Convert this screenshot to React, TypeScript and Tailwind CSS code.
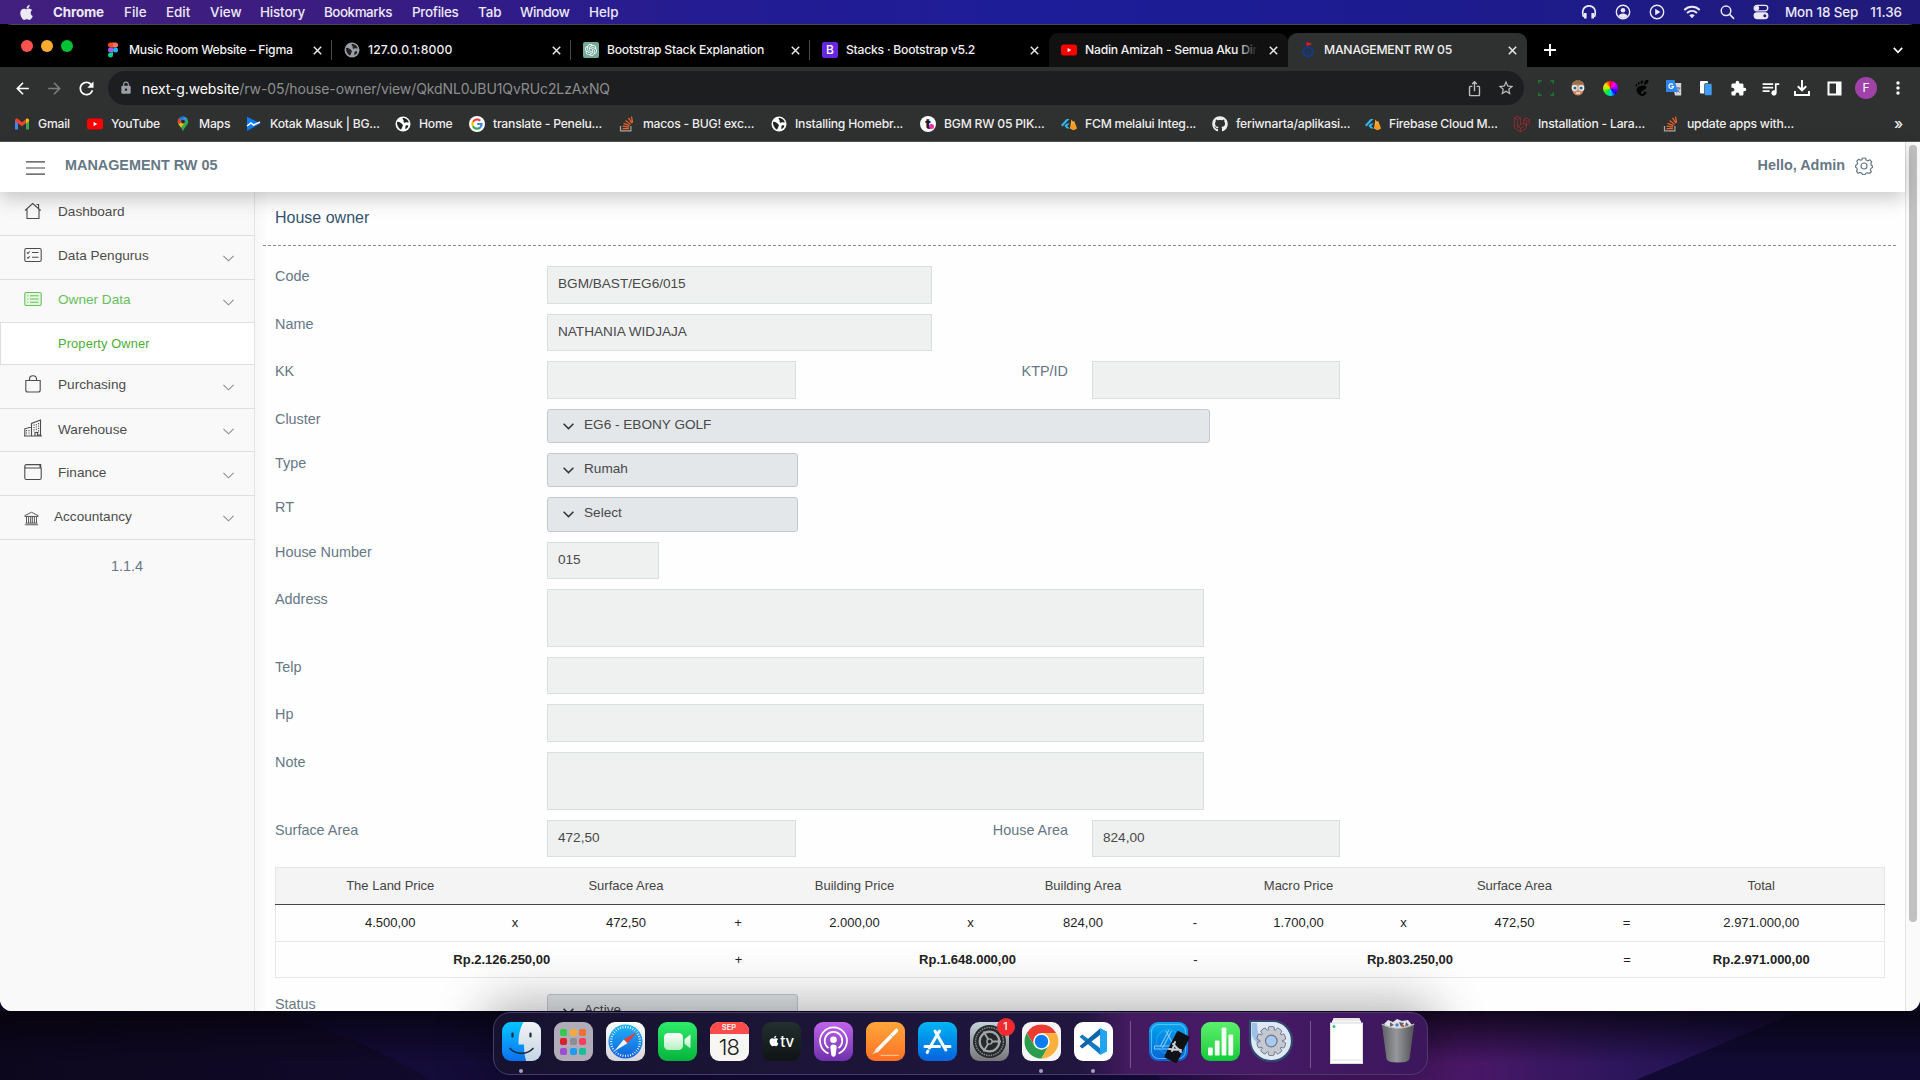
import React from 'react';
import { FaApple, FaGithub, FaLaravel, FaStackOverflow, FaYoutube } from 'react-icons/fa';
import { MdArrowBack, MdArrowForward, MdExtension, MdIosShare, MdLock, MdMoreVert, MdQueueMusic, MdRefresh, MdStarBorder } from 'react-icons/md';
import { SiGnome, SiOpenai } from 'react-icons/si';

type Node = React.ReactNode;

/* ---------- menu bar ---------- */

const menus: [string, string][] = [
  ['Chrome', 'w-[71px] font-bold tracking-[-0.15px]'],
  ['File', 'w-[42px]'],
  ['Edit', 'w-[44px]'],
  ['View', 'w-[50px]'],
  ['History', 'w-[64px] tracking-[-0.15px]'],
  ['Bookmarks', 'w-[88px] tracking-[-0.45px]'],
  ['Profiles', 'w-[66px] tracking-[-0.25px]'],
  ['Tab', 'w-[42px]'],
  ['Window', 'w-[69px] tracking-[-0.45px]'],
  ['Help', 'w-[40px]'],
];

function MenuBar() {
  return (
    <div className="flex h-6 items-center bg-[linear-gradient(90deg,#41207f_0%,#3b1c80_18%,#241c92_36%,#1d1d99_55%,#1d1b8b_80%,#211a78_100%)] pl-[18px] pr-[18px] text-[13.4px] font-medium text-[#ece9f5]">
      <FaApple className="mr-[18px] size-[17px]" />
      {menus.map(([t, c]) => (
        <span key={t} className={'shrink-0 whitespace-nowrap leading-6 ' + c}>{t}</span>
      ))}
      <div className="ml-auto flex items-center">
        <svg className="mr-[18px] size-4" viewBox="0 0 16 16" fill="none" stroke="currentColor" strokeWidth="1.7">
          <path d="M2.6 13C.2 6.500 3 1.800 8 1.800s7.800 4.700 5.400 11.200" />
          <path d="M4.300 9v5.600M11.700 9v5.600" strokeWidth="2.600" />
        </svg>
        <svg className="mr-[18px] size-4" viewBox="0 0 16 16" fill="none" stroke="currentColor" strokeWidth="1.400">
          <circle cx="8" cy="8" r="6.700" />
          <circle cx="8" cy="6.200" r="2.300" fill="currentColor" stroke="none" />
          <path d="M3.500 12c1-3.500 8-3.500 9 0-2 2.600-7 2.600-9 0z" fill="currentColor" stroke="none" />
        </svg>
        <svg className="mr-[18px] size-4" viewBox="0 0 16 16" fill="none" stroke="currentColor" strokeWidth="1.400">
          <circle cx="8" cy="8" r="6.700" />
          <path d="M6.200 4.800v6.400L11.400 8z" fill="currentColor" stroke="none" />
        </svg>
        <svg className="mr-[18px] h-4 w-[18px]" viewBox="0 0 18 16" fill="none" stroke="currentColor" strokeWidth="2">
          <path d="M1.300 6c4.400-4.200 11-4.200 15.400 0M4 9c3-2.800 7-2.800 10 0" />
          <path d="M6.300 11.300c1.600-1.400 3.800-1.400 5.400 0L9 14.200z" fill="currentColor" stroke="none" />
        </svg>
        <svg className="mr-[18px] size-4" viewBox="0 0 16 16" fill="none" stroke="currentColor" strokeWidth="1.500">
          <circle cx="7" cy="6.800" r="4.800" />
          <path d="M10.600 10.400l4 4" strokeLinecap="round" />
        </svg>
        <svg className="mr-[16px] size-4" viewBox="0 0 16 16" fill="none" stroke="currentColor" strokeWidth="1.300">
          <rect x="1.200" y="1.400" width="13.600" height="5.400" rx="2.700" />
          <circle cx="4" cy="4.100" r="1.600" fill="currentColor" />
          <rect x="1.200" y="9" width="13.600" height="5.600" rx="2.800" fill="currentColor" />
          <circle cx="11.800" cy="11.800" r="1.500" fill="#211a78" stroke="none" />
        </svg>
        <span className="w-[82px] whitespace-nowrap tracking-[-0.1px]">Mon 18 Sep</span>
        <span className="w-[35px] whitespace-nowrap text-right">11.36</span>
      </div>
    </div>
  );
}

/* ---------- small logos ---------- */

const Globe = ({ c }: { c: string }) => (
  <svg className={'size-4 shrink-0 ' + c} viewBox="0 0 16 16">
    <circle cx="8" cy="8" r="7.500" fill="currentColor" />
    <path d="M2 6c1.500-1 3 .3 4.200 1.300S8.500 9 7.600 10.300s-.6 2.700-2 3.200C3.500 12 1.800 9.500 2 6zM8 1.800c2.500.2 5 2 5.800 4.200-1.200 1.200-2.300-.2-3.500.6-.9.600-2.200-.4-1.600-1.600S6.500 3.600 8 1.800zM11 9.500c1.200-.5 2.400 0 2.300.8-.5 1.300-1.700 2.600-3 3 .6-1.300-.6-3 .7-3.800z" fill="#222" />
  </svg>
);

const YouTube = () => (
  <svg className="size-4 shrink-0" viewBox="0 0 16 16">
    <rect y="2.500" width="16" height="11" rx="2.500" fill="#f00" />
    <path d="M6.600 6v4.200L10.300 8z" fill="#fff" />
  </svg>
);

const StackOverflow = () => (
  <svg className="size-4 shrink-0" viewBox="0 0 16 16" fill="none" strokeWidth="1.200">
    <path d="M1.500 10v4.800h10.400V10" stroke="#a7a9ab" />
    <path d="M3.500 12.600h6.400M3.700 10.200l6.300.9M4.600 7.400l5.900 2.200M6.600 4.500l5 3.900M9.500 1.800l3.500 5.300M12.500.600l1.100 6" stroke="#f2662b" />
  </svg>
);

const Firebase = () => (
  <svg className="size-4 shrink-0" viewBox="0 0 16 16">
    <path d="M0 9l5.500-6h3L1.600 10.600zM3.500 9.700L5.700 7.500h3L6.200 10l2.500 2.500h-3z" fill="#37b4ee" />
    <path d="M9 12.500l1.400-9 1.800 2.500.8-1.400 3 7.800-3.500 1.800z" fill="#fbb52b" />
    <path d="M9 12.500l3.200-6.500 3.800 6.400-3.500 1.800z" fill="#f58220" opacity=".55" />
  </svg>
);

const Figma = () => (
  <svg className="size-4 shrink-0" viewBox="0 0 16 16">
    <path d="M8 .5H5.500a2.500 2.500 0 000 5H8z" fill="#f24e1e" />
    <path d="M8 .5h2.500a2.500 2.500 0 010 5H8z" fill="#ff7262" />
    <path d="M8 5.500H5.500a2.500 2.500 0 000 5H8z" fill="#a259ff" />
    <circle cx="10.500" cy="8" r="2.500" fill="#1abcfe" />
    <path d="M8 10.500H5.500A2.500 2.500 0 108 13z" fill="#0acf83" />
  </svg>
);

const Gmail = () => (
  <svg className="size-4 shrink-0" viewBox="0 0 16 16">
    <path d="M1 4v9.500h3V7z" fill="#4285f4" />
    <path d="M15 4v9.500h-3V7z" fill="#34a853" />
    <path d="M1 4.500C1 2.500 3 2.200 4 3l4 3.200L12 3v4L8 10.200 1 5.300z" fill="#ea4335" />
    <path d="M12 3c1.200-.8 3-.4 3 1.500v.8L12 7.500z" fill="#fbbc04" />
  </svg>
);

const Maps = () => (
  <svg className="size-4 shrink-0" viewBox="0 0 16 16">
    <path d="M8 .5a5.200 5.200 0 00-5.200 5.200C2.800 9.500 7 11 8 15.500 9 11 13.200 9.500 13.200 5.700A5.200 5.200 0 008 .5z" fill="#34a853" />
    <path d="M8 .5A5.200 5.200 0 004 2.300l2.500 2.200L9.800.800A5 5 0 008 .5z" fill="#1a73e8" />
    <path d="M4 2.300a5.200 5.200 0 00-.3 6.300L6.500 5z" fill="#ea4335" />
    <path d="M3.700 8.600c.6 1 1.500 1.800 2.300 2.800l4-4.700L6.700 6z" fill="#fbbc04" />
    <path d="M9.800.800l-3.300 4 2.500 1.600 3.300-3.700z" fill="#4285f4" />
    <circle cx="8" cy="5.700" r="1.900" fill="#2b2b2b" />
  </svg>
);

const Mail = () => (
  <svg className="size-4 shrink-0" viewBox="0 0 16 16">
    <path d="M1 .8l13.500 6.700L1 15z" fill="#0a7cff" />
    <path d="M1 10l4-3 2.500 2L14 6" stroke="#fff" strokeWidth="1.500" fill="none" />
  </svg>
);

const Google = () => (
  <svg className="size-4 shrink-0" viewBox="0 0 16 16" fill="none" strokeWidth="2.200">
    <circle cx="8" cy="8" r="8" fill="#fff" />
    <path d="M11.200 4.700A4.600 4.600 0 004 5.800" stroke="#ea4335" />
    <path d="M4 5.800a4.600 4.600 0 000 4.400" stroke="#fbbc05" />
    <path d="M4 10.200a4.600 4.600 0 007 1.400" stroke="#34a853" />
    <path d="M11 11.600A4.600 4.600 0 0012.600 8H8.200" stroke="#4285f4" />
  </svg>
);

const Tiket = () => (
  <span className="relative flex size-4 shrink-0 items-center justify-center rounded-full bg-white text-[14px] font-black leading-none text-[#1c1d3a]">
    t
    <span className="absolute bottom-[3px] right-[2px] size-[5px] rounded-full bg-[#ff2ba0]" />
  </span>
);

const Crest = () => (
  <svg className="size-4 shrink-0" viewBox="0 0 16 16" fill="none">
    <circle cx="8" cy="9.700" r="4.600" stroke="#123a86" strokeWidth="2.200" />
    <circle cx="8" cy="9.700" r="1.600" stroke="#123a86" />
    <path d="M2 2.500h4" stroke="#123a86" />
    <path d="M6.500 0l6 2-6 2z" fill="#f0161c" />
  </svg>
);

/* ---------- browser chrome ---------- */

const Close = () => (
  <svg className="size-[9px] shrink-0" viewBox="0 0 9 9" stroke="#e8e8e8" strokeWidth="1.500">
    <path d="M.8.800l7.400 7.400M8.200.800L.8 8.200" />
  </svg>
);

type TabProps = { icon: Node; title: string; state?: 'active' | 'hover'; divider?: boolean; track?: string };

function Tab({ icon, title, state, divider, track = 'tracking-[-0.25px]' }: TabProps) {
  const bg = state === 'active' ? ' rounded-t-[9px] bg-[#2f3030]' : state === 'hover' ? ' rounded-t-[9px] bg-[#111]' : '';
  return (
    <div className={'relative flex h-[34px] w-[239px] items-center pl-3 pr-[10px]' + bg}>
      {icon}
      <span className={'ml-2 w-[178px] shrink-0 overflow-hidden whitespace-nowrap text-[12.200px] font-medium text-[#f1f1f1] ' + track}>{title}</span>
      <span className="ml-auto"><Close /></span>
      {state === 'hover' && <span className="absolute right-[22px] top-1 h-6 w-7 bg-gradient-to-r from-transparent to-[#111] to-70%" />}
      {divider && <span className="absolute right-0 top-[7px] h-5 w-px bg-[#4a4a4a]" />}
    </div>
  );
}

function TabStrip() {
  return (
    <div className="flex h-[42px] items-end bg-black pr-[17px]">
      <div className="flex w-[93px] shrink-0 gap-2 self-center pb-[1px] pl-[21px]">
        <span className="size-3 rounded-full bg-[#ff5350]" />
        <span className="size-3 rounded-full bg-[#fdac2f]" />
        <span className="size-3 rounded-full bg-[#01c136]" />
      </div>
      <Tab icon={<Figma />} title="Music Room Website – Figma" divider />
      <Tab icon={<Globe c="text-[#9aa0a6]" />} title="127.0.0.1:8000" track="tracking-[0.150px]" divider />
      <Tab
        icon={<span className="flex size-4 shrink-0 items-center justify-center rounded-[2px] bg-[#74aa9c]"><SiOpenai className="size-3 text-white" /></span>}
        title="Bootstrap Stack Explanation"
        divider
      />
      <Tab
        icon={<span className="flex size-4 shrink-0 items-center justify-center rounded-[2px] bg-[#6528e0] text-[12px] font-medium leading-none text-white">B</span>}
        title="Stacks · Bootstrap v5.2"
      />
      <Tab icon={<YouTube />} title="Nadin Amizah - Semua Aku Dira" state="hover" />
      <Tab icon={<Crest />} title="MANAGEMENT RW 05" track="tracking-[-0.2px]" state="active" />
      <div className="flex h-[34px] flex-1 items-center justify-between pl-[17px]">
        <svg className="size-3" viewBox="0 0 12 12" stroke="#fff" strokeWidth="1.900"><path d="M6 0v12M0 6h12" /></svg>
        <svg className="h-[7px] w-[10px]" viewBox="0 0 10 7" stroke="#fff" strokeWidth="1.700" fill="none"><path d="M.8.800L5 5.300 9.200.800" /></svg>
      </div>
    </div>
  );
}

const Slot = ({ children }: { children: Node }) => <div className="flex w-8 shrink-0 items-center justify-center">{children}</div>;

function Toolbar() {
  return (
    <div className="flex h-[42px] items-center text-white">
      <div className="flex w-[108px] shrink-0 items-center pl-[6px]">
        <Slot><MdArrowBack className="size-[19px]" /></Slot>
        <Slot><MdArrowForward className="size-[19px] text-[#7c7c7c]" /></Slot>
        <Slot><MdRefresh className="size-[21px]" /></Slot>
      </div>
      <div className="flex h-[34px] w-[1416px] shrink-0 items-center rounded-full bg-[#1d1e20] pl-[11px] pr-[2px]">
        <MdLock className="mr-[9px] size-[14px] text-[#9aa0a6]" />
        <span className="whitespace-nowrap text-[14px] tracking-[-0.1px] text-[#8d8e90]">
          <span className="text-white">next-g.website</span>/rw-05/house-owner/view/QkdNL0JBU1QvRUc2LzAxNQ
        </span>
        <div className="ml-auto flex text-[#bdbdbd]">
          <Slot><MdIosShare className="size-[17px]" /></Slot>
          <Slot><MdStarBorder className="size-[18px]" /></Slot>
        </div>
      </div>
      <div className="flex flex-1 items-center pl-[6px]">
        <Slot>
          <svg className="size-4" viewBox="0 0 16 16" fill="none" stroke="#1f7a2e" strokeWidth="1.500"><path d="M.8 3.500V.8h2.700M12.500.8h2.700v2.700M15.200 12.500v2.700h-2.700M3.500 15.200H.8v-2.700" /></svg>
        </Slot>
        <Slot>
          <svg className="size-4" viewBox="0 0 16 16">
            <path d="M2 8C1 3 4 .500 8 .500S15 3 14 8c0 4-2.500 7.500-6 7.500S2 12 2 8z" fill="#d08a66" />
            <path d="M1.600 6C1.600 2.500 4 .500 8 .500s6.400 2 6.400 5.500l-2-1.500H3.600z" fill="#96704d" />
            <circle cx="4.600" cy="8" r="3" fill="#e9f3f5" /><circle cx="11.400" cy="8" r="3" fill="#e9f3f5" />
            <circle cx="4.900" cy="8" r="1.600" fill="#2c6b80" /><circle cx="11.100" cy="8" r="1.600" fill="#2c6b80" />
            <path d="M6 13h4" stroke="#fff" />
          </svg>
        </Slot>
        <Slot><span className="size-[15px] rounded-full bg-[conic-gradient(#f02,#f0f_12%,#80f_25%,#00f_37%,#0cf_48%,#0e3_62%,#ae0_75%,#fd0_86%,#f02)]" /></Slot>
        <Slot><SiGnome className="size-4 text-black" /></Slot>
        <Slot>
          <svg className="size-4" viewBox="0 0 16 16">
            <path d="M6 3h9.200v12.500H9z" fill="#d3d6da" />
            <path d="M9.500 8h5M12 7v1.500M10 12.500c2-1 3-2.500 3.500-4.500M11 9.500l2.500 3" stroke="#6b7480" fill="none" />
            <path d="M0 0h8.500l3.500 12H0z" fill="#2d86ef" />
            <path d="M7 4.600A2.300 2.300 0 107.500 6.500H5.400" stroke="#fff" strokeWidth="1.200" fill="none" />
          </svg>
        </Slot>
        <Slot>
          <svg className="size-4" viewBox="0 0 16 16"><rect x="2" y="1" width="8" height="12.500" rx="1" fill="#fff" /><rect x="6.500" y="3.500" width="7.500" height="12" rx="1" fill="#3d9cf3" stroke="#2f3030" strokeWidth=".6" /></svg>
        </Slot>
        <Slot><MdExtension className="size-[17px]" /></Slot>
        <Slot><MdQueueMusic className="size-[21px]" /></Slot>
        <Slot>
          <svg className="size-4" viewBox="0 0 16 16" fill="none" stroke="#fff" strokeWidth="1.900"><path d="M8 0v10M3.800 6.200L8 10.300l4.200-4.100M1 11v4h14v-4" /></svg>
        </Slot>
        <Slot>
          <svg className="size-[15px]" viewBox="0 0 15 15"><rect x="1.500" y="1.500" width="12" height="12" fill="none" stroke="#fff" strokeWidth="2" /><path d="M9 2h5v11H9z" fill="#fff" /></svg>
        </Slot>
        <Slot><span className="flex size-[22px] items-center justify-center rounded-full bg-[#a142a8] text-[12px] leading-none">F</span></Slot>
        <Slot><MdMoreVert className="size-5" /></Slot>
      </div>
    </div>
  );
}

const bookmarks: [string, Node, string][] = [
  ['Gmail', <Gmail key="i" />, 'w-[73px]'],
  ['YouTube', <YouTube key="i" />, 'w-[88px]'],
  ['Maps', <Maps key="i" />, 'w-[71px]'],
  ['Kotak Masuk | BG...', <Mail key="i" />, 'w-[149px]'],
  ['Home', <Globe key="i" c="text-white" />, 'w-[74px]'],
  ['translate - Penelu...', <Google key="i" />, 'w-[150px]'],
  ['macos - BUG! exc...', <StackOverflow key="i" />, 'w-[152px]'],
  ['Installing Homebr...', <Globe key="i" c="text-white" />, 'w-[149px]'],
  ['BGM RW 05 PIK...', <Tiket key="i" />, 'w-[141px]'],
  ['FCM melalui Integ...', <Firebase key="i" />, 'w-[151px]'],
  ['feriwnarta/aplikasi...', <FaGithub key="i" className="size-4 shrink-0" />, 'w-[153px]'],
  ['Firebase Cloud M...', <Firebase key="i" />, 'w-[149px]'],
  ['Installation - Lara...', <FaLaravel key="i" className="size-4 shrink-0 text-[#d0252a]" />, 'w-[149px]'],
  ['update apps with...', <StackOverflow key="i" />, 'w-[140px]'],
];

function Bookmarks() {
  return (
    <div className="flex h-[31px] items-center pl-[14px] pr-[17px] text-[12.200px] font-medium tracking-[-0.230px] text-[#eee]">
      {bookmarks.map(([t, icon, w]) => (
        <div key={t} className={'flex shrink-0 items-center gap-2 whitespace-nowrap ' + w}>{icon}{t}</div>
      ))}
      <span className="ml-auto pb-[3px] text-[15px] leading-none">»</span>
    </div>
  );
}

/* ---------- application ---------- */

const Chevron = () => (
  <svg className="h-[7px] w-[11px] shrink-0" viewBox="0 0 11 7" fill="none" stroke="#8d8d8d" strokeWidth="1.100"><path d="M.4.800l5.100 5 5.100-5" /></svg>
);

type SideProps = { icon: Node; label: string; h: string; green?: boolean; plain?: boolean; gap?: string };

function SideItem({ icon, label, h, green, plain, gap = 'w-[34px]' }: SideProps) {
  return (
    <div className={'flex shrink-0 items-center border-b border-[#dedede] pl-6 pr-5 text-[13.6px] ' + h + (green ? ' text-[#67c05b]' : ' text-[#4c4c4c]')}>
      <span className={'shrink-0 pb-1 ' + gap}>{icon}</span>
      <span>{label}</span>
      {!plain && <span className="ml-auto pt-[3px]"><Chevron /></span>}
    </div>
  );
}

const ico = { className: 'size-[18px]', viewBox: '0 0 18 18', fill: 'none', stroke: 'currentColor', strokeWidth: 1.1 };

function Sidebar() {
  return (
    <div className="flex w-[255px] shrink-0 flex-col border-r border-[#e4e4e4] bg-[#f9f9f9]">
      <SideItem plain h="h-11 pb-[2px]" label="Dashboard" icon={
        <svg {...ico}><path d="M1 8.500L8.700 1.500l8 7M3 7v9.500h12V7M12.600 2.500h2v3.500" /></svg>} />
      <SideItem h="h-11 pb-[2px]" label="Data Pengurus" icon={
        <svg {...ico}><rect x=".8" y="2.500" width="16.400" height="13" rx="1.500" /><path d="M8 6.500h6.500M8 11.300h6.500M3 6.500l1 1 1.700-2M3 11.300l1 1 1.700-2" /></svg>} />
      <SideItem green h="h-[43px] pb-[1px]" label="Owner Data" icon={
        <svg {...ico}><rect x=".8" y="2.500" width="16.400" height="13" rx="1.500" fill="#e4f6e0" /><path d="M6 5.800h8.500M6 9h8.500M6 12.200h8.500M3.300 5.800h1M3.300 9h1M3.300 12.200h1" /></svg>} />
      <div className="flex h-[42px] shrink-0 items-center border-b border-l border-[#dedede] bg-white pl-[57px] text-[12.8px] tracking-[0.150px] text-[#4eae36]">Property Owner</div>
      <SideItem h="h-11 pb-[2px]" label="Purchasing" icon={
        <svg {...ico}><path d="M1.800 5.500h14.400v9.500q0 2-2 2H3.800q-2 0-2-2zM5.500 5.500V4q0-3.300 3.500-3.300T12.500 4v1.500" /></svg>} />
      <SideItem h="h-[43px]" label="Warehouse" icon={
        <svg {...ico}><path d="M.8 17V9.800L7.500 8v9M7.500 17V4.500l9-3.500v16M0 17h18M11 17v-3.500h2.500V17M15 17v-2" /><path d="M2.500 11v5M5 11v5M10 5.500V13M12.300 5v7.500M14.500 4v10" strokeDasharray="1.200 1.200" /></svg>} />
      <SideItem h="h-11" label="Finance" icon={
        <svg {...ico}><path d="M.8 3.500v11.500q0 1.500 1.500 1.500h13.400q1.500 0 1.500-1.500V5H2Q.8 5 .8 3.300T2.500 1.600h14.200V5M16 1.600v2.600" /></svg>} />
      <SideItem h="h-11 pb-[1px]" gap="w-[30px] pt-[6px]" label="Accountancy" icon={
        <svg {...ico} className="size-[15px]"><path d="M1 5.500l8-4 8 4v1H1zM1 16.500h16M2 14.500h14M3 6.500v8M5.500 6.500v8M8 6.500v8M10 6.500v8M12.500 6.500v8M15 6.500v8" /></svg>} />
      <div className="mt-4 text-center text-[14.4px] text-[#667785]">1.1.4</div>
    </div>
  );
}

const Field = ({ c, children }: { c: string; children?: Node }) => (
  <div className={'shrink-0 border border-[#d8dfe3] bg-[#eff1f1] pl-[10px] pt-[7px] text-[13.6px] leading-5 text-[#494949] ' + c}>{children}</div>
);

const Select = ({ c, children }: { c: string; children: Node }) => (
  <div className={'flex shrink-0 items-center rounded-[3px] border border-[#c2cad0] bg-[#e3e7ea] pb-[2px] pl-[15px] text-[13.6px] text-[#494949] ' + c}>
    <svg className="mr-[10px] mt-[2px] h-[7px] w-[11px]" viewBox="0 0 11 7" fill="none" stroke="#333" strokeWidth="1.500"><path d="M.6.800l4.900 4.800L10.400.800" /></svg>
    {children}
  </div>
);

const Row = ({ label, h, children }: { label: string; h: string; children: Node }) => (
  <div className={'flex shrink-0 items-start ' + h}>
    <span className="w-[272px] shrink-0 text-[14.400px] leading-5 text-[#667785]">{label}</span>
    {children}
  </div>
);

const Side = ({ children }: { children: Node }) => (
  <span className="w-[272px] shrink-0 text-right text-[14.400px] leading-5 text-[#667785]">{children}</span>
);

function PriceTable() {
  return (
    <table className="w-[1610px] table-fixed border-collapse border border-[#e6e6e6] text-center text-[13px] text-[#222]">
      <colgroup>
        <col className="w-[230px]" /><col className="w-[20px]" /><col className="w-[202px]" /><col className="w-[22px]" />
        <col className="w-[211px]" /><col className="w-[21px]" /><col className="w-[204px]" /><col className="w-[20px]" />
        <col className="w-[187px]" /><col className="w-[23px]" /><col className="w-[199px]" /><col className="w-[25px]" />
        <col className="w-[245px]" />
      </colgroup>
      <thead>
        <tr className="h-[37px] border-b border-[#444] bg-[#f4f4f4] text-[#444]">
          {['The Land Price', '', 'Surface Area', '', 'Building Price', '', 'Building Area', '', 'Macro Price', '', 'Surface Area', '', 'Total'].map((t, i) => (
            <td key={i} className="pr-px">{t}</td>
          ))}
        </tr>
      </thead>
      <tbody>
        <tr className="h-[37px] border-b border-[#e6e6e6]">
          {['4.500,00', 'x', '472,50', '+', '2.000,00', 'x', '824,00', '-', '1.700,00', 'x', '472,50', '=', '2.971.000,00'].map((t, i) => (
            <td key={i} className="pr-px">{t}</td>
          ))}
        </tr>
        <tr className="h-[36px]">
          <td colSpan={3} className="font-bold">Rp.2.126.250,00</td><td>+</td>
          <td colSpan={3} className="font-bold">Rp.1.648.000,00</td><td>-</td>
          <td colSpan={3} className="font-bold">Rp.803.250,00</td><td>=</td>
          <td className="pr-px font-bold">Rp.2.971.000,00</td>
        </tr>
      </tbody>
    </table>
  );
}

function Content() {
  return (
    <div className="flex flex-1 flex-col overflow-hidden bg-[linear-gradient(90deg,#f7f7f7,#fefefe_12px)] pl-2 pr-2">
      <div className="flex h-[53px] shrink-0 items-center pb-[2px] pl-3 text-[16px] text-[#35536f]">House owner</div>
      <div className="h-px shrink-0 bg-[repeating-linear-gradient(90deg,#8b8b8b_0_3px,transparent_3px_5px)]" />
      <div className="flex flex-col pl-3 pt-5">
        <Row label="Code" h="h-[48px]"><Field c="h-[38px] w-[385px]">BGM/BAST/EG6/015</Field></Row>
        <Row label="Name" h="h-[47px]"><Field c="h-[37px] w-[385px]">NATHANIA WIDJAJA</Field></Row>
        <Row label="KK" h="h-[48px]">
          <Field c="h-[38px] w-[249px]" />
          <Side>KTP/ID</Side>
          <Field c="ml-6 h-[38px] w-[248px]" />
        </Row>
        <Row label="Cluster" h="h-[44px]"><Select c="h-[34px] w-[663px]">EG6 - EBONY GOLF</Select></Row>
        <Row label="Type" h="h-[44px]"><Select c="h-[34px] w-[251px]">Rumah</Select></Row>
        <Row label="RT" h="h-[45px]"><Select c="h-[35px] w-[251px]">Select</Select></Row>
        <Row label="House Number" h="h-[47px]"><Field c="h-[37px] w-[112px]">015</Field></Row>
        <Row label="Address" h="h-[68px]"><Field c="h-[58px] w-[657px]" /></Row>
        <Row label="Telp" h="h-[47px]"><Field c="h-[37px] w-[657px]" /></Row>
        <Row label="Hp" h="h-[48px]"><Field c="h-[38px] w-[657px]" /></Row>
        <Row label="Note" h="h-[68px]"><Field c="h-[58px] w-[657px]" /></Row>
        <Row label="Surface Area" h="h-[47px]">
          <Field c="h-[37px] w-[249px]">472,50</Field>
          <Side>House Area</Side>
          <Field c="ml-6 h-[37px] w-[248px]">824,00</Field>
        </Row>
        <PriceTable />
        <div className="pt-4">
          <Row label="Status" h="h-[45px]"><Select c="h-[34px] w-[251px]">Active</Select></Row>
        </div>
      </div>
    </div>
  );
}

function AppPage() {
  return (
    <div className="flex min-h-0 flex-1 bg-white font-['Liberation_Sans',Arial,sans-serif]">
      <div className="flex w-[1905px] shrink-0 flex-col">
        <div className="relative z-10 flex h-[50px] shrink-0 items-center bg-white pb-[2px] pl-[26px] pr-8 text-[14.400px] font-bold text-[#667785] shadow-[0_6px_20px_rgba(0,0,0,0.22)]">
          <svg className="mr-[20px] mt-[3px] h-[14px] w-[19px]" viewBox="0 0 19 14" stroke="#444" strokeWidth="1.200"><path d="M0 .9h19M0 7h19M0 13.100h19" /></svg>
          MANAGEMENT RW 05
          <span className="ml-auto mr-[10px]">Hello, Admin</span>
          <svg className="size-[18px]" viewBox="0 0 18 18" fill="none" stroke="#667785" strokeWidth="1.200" strokeLinejoin="round">
            <path d="M7.500 1h3l.6 2 1.800.8 2-1 1.800 2-.9 2 .5 1.500 1.200.7v1.500l-1.500.8-.6 1.600.9 1.900-1.900 1.700-1.900-.8-1.600.6-.7 1.200h-2.700l-.8-1.400-1.600-.6-1.900.8-1.700-1.900.8-1.900-.6-1.600L.5 10V8.500L2 7.500l.6-1.400-.8-2 1.900-1.800 1.900.9 1.400-.6z" />
            <circle cx="9" cy="9" r="3" />
          </svg>
        </div>
        <div className="flex min-h-0 flex-1">
          <Sidebar />
          <Content />
        </div>
      </div>
      <div className="flex flex-1 justify-center border-l border-[#e3e3e3] bg-[#fafafa] pt-[3px]">
        <span className="h-[777px] w-2 rounded-full bg-[#c1c1c1]" />
      </div>
    </div>
  );
}

/* ---------- dock ---------- */

const Tile = ({ c = '', dot, children }: { c?: string; dot?: boolean; children?: Node }) => (
  <div className="relative mr-[13px] size-[39px] shrink-0">
    <div className={'flex size-[39px] items-center justify-center overflow-hidden rounded-[9px] ' + c}>{children}</div>
    {dot && <span className="absolute left-[17.500px] top-[47px] size-1 rounded-full bg-[#a79fc4]" />}
  </div>
);

const pads = ['bg-[#35c84b]', 'bg-[#f7a93b]', 'bg-[#f0702d]', 'bg-[#d9202e]', 'bg-[#8b8f93]', 'bg-[#ff3d5e]', 'bg-[#9b4fd0]', 'bg-[#1f9bf5]', 'bg-[#16bd98]'];
const ticks = Array.from({ length: 36 }, (_, i) => i * 10);
const teeth = Array.from({ length: 10 }, (_, i) => i * 36);

function Dock() {
  return (
    <div className="relative z-20 mx-auto flex h-[63px] w-[935px] rounded-[17px] border border-[#4a3b6e] bg-[linear-gradient(90deg,#17122f_0%,#1c1538_40%,#20163f_63%,#441a60_68%,#471a66_80%,#3c175c_100%)] pl-[8px] pt-[9px] font-[Inter,sans-serif] shadow-[0_0_50px_10px_rgba(0,0,0,0.3)]">
      <Tile dot>
        <svg viewBox="0 0 39 39">
          <defs>
            <linearGradient id="fa" x2="0" y2="1"><stop stopColor="#06c6ff" /><stop offset="1" stopColor="#0b70f0" /></linearGradient>
            <linearGradient id="fb" x2="0" y2="1"><stop stopColor="#f3f3f5" /><stop offset="1" stopColor="#c4d5e4" /></linearGradient>
          </defs>
          <rect width="39" height="39" fill="url(#fa)" />
          <path d="M21.500 0c-4 7-5 14-5 22.500h5.500c0 6 .5 11 2.200 16.500H39V0z" fill="url(#fb)" />
          <path d="M10.500 11.500v3M28.500 11.500v3" stroke="#1b2a3d" strokeWidth="2.200" strokeLinecap="round" />
          <path d="M8 26.500c6 6.500 17 6.500 23 0" stroke="#1b2a3d" strokeWidth="1.700" fill="none" strokeLinecap="round" />
        </svg>
      </Tile>
      <Tile c="bg-[#b0adb8]">
        <div className="grid grid-cols-3 gap-[2.500px]">
          {pads.map((p) => <span key={p} className={'size-[7px] rounded-[2px] ' + p} />)}
        </div>
      </Tile>
      <Tile c="bg-gradient-to-b from-white to-[#d6d6da]">
        <svg viewBox="0 0 39 39">
          <defs><linearGradient id="sa" x2="0" y2="1"><stop stopColor="#1fb4f6" /><stop offset="1" stopColor="#1160dc" /></linearGradient></defs>
          <circle cx="19.500" cy="19.500" r="17" fill="url(#sa)" />
          {ticks.map((a) => <path key={a} d="M19.500 3.800v2.400" stroke="#fff" strokeWidth=".8" transform={`rotate(${a} 19.500 19.500)`} />)}
          <path d="M31 10L17.800 17.500l3.600 3.800z" fill="#ef3b30" />
          <path d="M8 29.500l9.800-12 3.600 3.800z" fill="#f4f4f4" />
        </svg>
      </Tile>
      <Tile c="bg-gradient-to-b from-[#2dec6b] to-[#03b33c]">
        <svg viewBox="0 0 39 39">
          <defs><linearGradient id="ft" x2="0" y2="1"><stop stopColor="#fff" /><stop offset="1" stopColor="#b5efc2" /></linearGradient></defs>
          <rect x="6" y="11" width="19" height="17" rx="4.500" fill="url(#ft)" />
          <path d="M26.500 17.200l6-4.700v14l-6-4.700z" fill="url(#ft)" />
        </svg>
      </Tile>
      <Tile c="flex-col bg-[#f7f6f3]">
        <span className="h-3 w-full bg-[#fc4c49] text-center text-[7.500px] font-semibold leading-3 text-white">SEP</span>
        <span className="flex-1 text-[22px] font-light leading-[26px] tracking-[-0.8px] text-[#222]">18</span>
      </Tile>
      <Tile c="bg-gradient-to-b from-[#22302e] to-[#0f1416] text-[15px] font-medium leading-none tracking-[-0.3px] text-white">
        <FaApple className="mb-px size-3" />tv
      </Tile>
      <Tile c="bg-gradient-to-b from-[#c163ea] to-[#7130ae]">
        <svg viewBox="0 0 39 39" fill="none" stroke="#fff" strokeWidth="1.700">
          <path d="M14.500 31.500a13.500 13.500 0 1110 0" />
          <path d="M14.500 26a8.800 8.800 0 1110 0" />
          <circle cx="19.500" cy="17.800" r="3.300" fill="#fff" stroke="none" />
          <path d="M16.300 25q0-2.500 3.200-2.500t3.200 2.500l-1 8q-.4 1.800-2.200 1.800T17.300 33z" fill="#fff" stroke="none" />
        </svg>
      </Tile>
      <Tile c="bg-gradient-to-b from-[#ffa63a] to-[#fd7024]">
        <svg viewBox="0 0 39 39" strokeLinecap="round">
          <path d="M15 33.300h17.500" stroke="#ffd3a6" />
          <path d="M30.500 8.500L11 28.500" stroke="#fff" strokeWidth="3.600" />
          <path d="M11.500 26l-5.500 6.500 7.500-4z" fill="#e9e9e9" />
          <path d="M24.500 12.500l3 3" stroke="#bbb" strokeWidth=".8" />
        </svg>
      </Tile>
      <Tile c="bg-gradient-to-b from-[#07b5f4] to-[#0a62dc]">
        <svg viewBox="0 0 39 39" stroke="#fff" strokeWidth="3" strokeLinecap="round">
          <path d="M21.500 9L11.500 26M17 9l10.800 19M7 24.500h14.500M26.500 24.500H32M10 29l-.8 1.400" />
        </svg>
      </Tile>
      <div className="relative">
        <Tile c="bg-gradient-to-b from-[#c4d3d8] to-[#77777b]">
          <svg viewBox="0 0 39 39" fill="none">
            <circle cx="19.500" cy="19.500" r="16.500" fill="#26292b" />
            <circle cx="19.500" cy="19.500" r="14" stroke="#86898b" strokeWidth="1.500" strokeDasharray="1.400 1" />
            <circle cx="19.500" cy="19.500" r="9.800" stroke="#a4a6a7" strokeWidth="2.200" />
            <circle cx="19.500" cy="19.500" r="2.600" stroke="#a4a6a7" strokeWidth="1.400" />
            <path d="M22 19.500h9M18.200 17.300L13.500 9.500M18.200 21.700l-4.700 7.800" stroke="#a4a6a7" strokeWidth="1.800" />
          </svg>
        </Tile>
        <span className="absolute left-[27px] top-[-4px] flex size-[18px] items-center justify-center rounded-full bg-[#f12a30] text-[10.500px] font-medium leading-none text-white">1</span>
      </div>
      <Tile dot c="bg-[#f6f4f5]">
        <svg viewBox="0 0 39 39">
          <circle cx="19.500" cy="19.500" r="17" fill="#fff" />
          <path d="M19.500 11.200H34.300A17 17 0 004.800 11L12.300 23.700z" fill="#ea3c33" />
          <path d="M12.300 23.700L4.800 11A17 17 0 0019.500 36.500L26.700 23.700z" fill="#2a9c4b" />
          <path d="M26.700 23.700L19.500 36.500A17 17 0 0034.300 11.200H19.500z" fill="#fbb13c" />
          <circle cx="19.500" cy="19.500" r="8.300" fill="#fff" />
          <circle cx="19.500" cy="19.500" r="6.700" fill="#0b7bf0" />
        </svg>
      </Tile>
      <Tile dot c="bg-white">
        <svg viewBox="0 0 39 39">
          <path d="M5.500 14.800l2.800-2.300L26 26v6.500z" fill="#0f7ac4" />
          <path d="M5.500 24.200l2.800 2.300L26 13V6.500z" fill="#0b66ad" />
          <path d="M26 6l7 3.500v20L26 33z" fill="#22a4ee" />
        </svg>
      </Tile>
      <span className="ml-[4px] mr-[18px] -mt-px h-[47px] w-px bg-[#75578f]" />
      <div className="relative">
        <Tile c="bg-gradient-to-b from-[#09a7ee] to-[#0a63d6]">
          <svg viewBox="0 0 39 39" fill="none" stroke="#7cc8f8" strokeWidth="1.100">
            <rect x="2.500" y="2.500" width="34" height="34" rx="7" opacity=".7" />
            <circle cx="19.500" cy="19.500" r="12" opacity=".3" />
            <path d="M20 8l-9 17M22.500 9l-9 17M17 9l9 17M5.500 24h17v3h-17z" />
          </svg>
        </Tile>
        <svg className="absolute left-[14px] top-[8px] h-[34px] w-[28px]" viewBox="0 0 28 34">
          <rect x="7" y="2" width="14" height="30" rx="1.500" fill="#101114" transform="rotate(27 14 17)" />
          <path d="M6 19l12 1M12 12l-3 9M10 14l8 8" stroke="#c9ccd0" strokeWidth="2" strokeLinecap="round" />
        </svg>
      </div>
      <Tile c="bg-gradient-to-b from-[#5bf06c] to-[#06cb37]">
        <svg viewBox="0 0 39 39" fill="#f2fff3">
          <rect x="7" y="25.500" width="4.800" height="8" rx="1" /><rect x="13.800" y="18.500" width="4.800" height="15" rx="1" />
          <rect x="20.600" y="5.500" width="4.800" height="28" rx="1" /><rect x="27.400" y="12.500" width="4.800" height="21" rx="1" />
        </svg>
      </Tile>
      <svg className="-ml-[5px] -mt-[3px] h-[44px] w-[46px]" viewBox="0 0 46 44">
        <path d="M2 2h23a19 20 0 0119 20 20 20 0 01-20 20A21 21 0 012 22z" fill="#dfe9f6" stroke="#31486e" strokeWidth="2.200" />
        <path d="M4 4h5q0 14 8 24-11-4-13-12z" fill="#9fbfe8" />
        {teeth.map((a) => <rect key={a} x="20.300" y="7.500" width="6" height="6" rx="1.500" fill="#c5c8d0" stroke="#6e7688" strokeWidth=".9" transform={`rotate(${a} 23.300 22)`} />)}
        <circle cx="23.300" cy="22" r="11" fill="#c5c8d0" />
        <circle cx="23.300" cy="22" r="5.800" fill="#a9c9ee" stroke="#6e7688" strokeWidth="1.200" />
      </svg>
      <span className="ml-[16px] mr-[19px] -mt-px h-[47px] w-px bg-[#75578f]" />
      <svg className="-mt-[4px] mr-[18px] h-[46px] w-[33px]" viewBox="0 0 33 46">
        <rect x="3" y="0" width="27" height="10" rx="1" fill="#e5e5e5" /><rect x="2" y="2.500" width="29" height="10" fill="#f6f6f6" />
        <rect x=".5" y="5" width="32" height="40.500" fill="#fff" stroke="#dcdcdc" /><circle cx="4" cy="8.500" r="1.500" fill="#37c978" />
        <path d="M2 42h29" stroke="#e0e0e0" />
      </svg>
      <svg className="-mt-[4px] h-[46px] w-[34px]" viewBox="0 0 34 46">
        <defs><linearGradient id="tr"><stop stopColor="#5f6063" /><stop offset=".45" stopColor="#97989b" /><stop offset="1" stopColor="#505154" /></linearGradient></defs>
        <path d="M3 6l4-4 5 2 4-3 5 2 6-1 4 5-6 5H8z" fill="#e4e4e6" />
        <path d="M9 4l4 3-4 2zM18 4l5 1-3 4zM25 4l3 3-4 2z" fill="#5d6470" />
        <circle cx="16" cy="7" r="1.800" fill="#4a86c8" /><circle cx="22" cy="8" r="1.300" fill="#d0523e" />
        <path d="M.8 6q16.200 8.500 32.400 0L28.500 41q-1 3.500-11.500 3.500T5.500 41z" fill="url(#tr)" />
        <path d="M.8 6q16.200 8.500 32.400 0" stroke="#b8b9bb" strokeWidth="1.200" fill="none" />
      </svg>
    </div>
  );
}

export default function App() {
  return (
    <div className="flex h-[1080px] w-[1920px] flex-col overflow-hidden bg-[#0b0720] font-[Inter,sans-serif]">
      <MenuBar />
      <div className="relative z-10 flex h-[987px] shrink-0 flex-col overflow-hidden rounded-b-xl bg-black">
        <div className="flex flex-col rounded-t-xl border-t border-[#4a4a4a]">
          <TabStrip />
        </div>
        <div className="flex h-[75px] flex-col border-b border-[#555] bg-[#2f3030]">
          <Toolbar />
          <Bookmarks />
        </div>
        <AppPage />
      </div>
      <div className="relative z-20 flex-1 bg-[linear-gradient(90deg,#0d071d_0%,#120a2d_25%,#150c38_58%,#4d1869_66%,#4b1868_76%,#2e165c_84%,#20124f_90%,#120b36_100%)] pt-px">
        <svg className="absolute left-0 top-0 h-full w-full" viewBox="0 0 1920 69" preserveAspectRatio="none">
          <defs>
            <linearGradient id="top" x2="0" y2="1"><stop stopColor="#05030c" stopOpacity=".8" /><stop offset=".75" stopColor="#05030c" stopOpacity="0" /></linearGradient>
          </defs>
          <path d="M270 0Q370 30 430 69H1160Q1130 20 1080 0z" fill="#150d3e" opacity=".7" />
          <path d="M1636 69L1800 0H1920V69z" fill="#110b33" />
          <rect width="1920" height="69" fill="url(#top)" />
        </svg>
        <Dock />
      </div>
    </div>
  );
}
